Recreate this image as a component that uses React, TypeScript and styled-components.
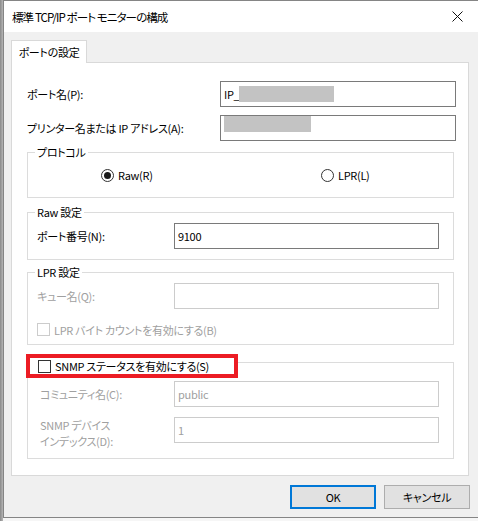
import { FC } from 'react'
import styled, { createGlobalStyle } from 'styled-components'

const font = `"Noto Sans CJK JP", "Noto Sans", "Liberation Sans", sans-serif`

const GlobalStyle = createGlobalStyle`
    html, body {
        margin: 0;
        padding: 0;
        background: #e9e9e9;
    }
    * {
        box-sizing: border-box;
    }
`

// styles
const Desktop = styled.div`
    width: 478px;
    height: 521px;
    overflow: hidden;
    padding-left: 3px;
    background: linear-gradient(to right, #8a8a8a 0, #b5b5b5 3px, transparent 3px), #f6f6f6;
    font-family: ${font};
    font-size: 11px;
    letter-spacing: -0.3px;
    font-feature-settings: 'palt' 1;
`

const Window = styled.div`
    width: 480px;
    height: 518px;
    border: 1px solid #858585;
    border-right: none;
    background: #f0f0f0;
    display: flex;
    flex-direction: column;
`

const TitleBar = styled.div`
    height: 31px;
    flex: none;
    background: #ffffff;
    display: flex;
    align-items: center;
    justify-content: space-between;
    padding: 0 0 0 8px;
    font-size: 11.5px;
    letter-spacing: -0.9px;
    color: #000;
`

const CloseButton = styled.div`
    width: 46px;
    height: 31px;
    margin-right: 14px;
    display: flex;
    align-items: center;
    justify-content: flex-end;
    padding-right: 6px;
`

const Body = styled.div`
    flex: 1;
    padding: 8px 0 0 7px;
    display: flex;
    flex-direction: column;
`

const TabStrip = styled.div`
    display: flex;
    height: 22px;
    flex: none;
`

const Tab = styled.div`
    width: 76px;
    height: 23px;
    background: #ffffff;
    border: 1px solid #d9d9d9;
    border-bottom: none;
    display: flex;
    align-items: center;
    justify-content: center;
    position: relative;
    z-index: 1;
`

const Panel = styled.div`
    width: 458px;
    flex: none;
    background: #ffffff;
    border: 1px solid #d9d9d9;
    padding: 18px 14px 16px 15px;
    display: flex;
    flex-direction: column;
`

const FieldRow = styled.div<{ $label: number; $input: number }>`
    display: grid;
    grid-template-columns: ${({ $label }) => $label}px ${({ $input }) => $input}px;
    grid-template-rows: 26px;
    align-items: center;
    height: 26px;
`

const Label = styled.div<{ $disabled?: boolean; $shift?: number }>`
    color: ${({ $disabled }) => ($disabled ? '#a0a0a0' : '#000')};
    line-height: 16px;
    white-space: nowrap;
    margin-top: ${({ $shift }) => $shift ?? 0}px;
`

const Input = styled.div<{ $disabled?: boolean }>`
    height: 26px;
    border: 1px solid ${({ $disabled }) => ($disabled ? '#cccccc' : '#7a7a7a')};
    display: flex;
    align-items: center;
    padding-left: 3px;
    color: ${({ $disabled }) => ($disabled ? '#a0a0a0' : '#000')};
    background: #fff;
`

const Redacted = styled.span<{ $w: number; $lift?: number }>`
    display: inline-block;
    width: ${({ $w }) => $w}px;
    height: 16px;
    margin-top: ${({ $lift }) => -($lift ?? 0)}px;
    background: #c3c3c3;
`

const Group = styled.div<{ $top: number; $pad: string }>`
    position: relative;
    width: 427px;
    margin-top: ${({ $top }) => $top}px;
    border: 1px solid #dcdcdc;
    padding: ${({ $pad }) => $pad};
    display: flex;
    flex-direction: column;
`

const Legend = styled.div`
    position: absolute;
    top: -9px;
    left: 7px;
    padding: 0 2px;
    background: #fff;
    line-height: 16px;
    color: #000;
`

const Highlight = styled.div`
    position: absolute;
    top: -9px;
    left: -2px;
    width: 212px;
    height: 24px;
    border: 4px solid #ec1c24;
    background: #fff;
    display: flex;
    align-items: center;
    padding-left: 8px;
    gap: 4px;
`

const RadioRow = styled.div`
    display: grid;
    grid-template-columns: 220px auto;
    padding-left: 73px;
    height: 44px;
    align-items: center;
`

const Option = styled.label<{ $disabled?: boolean }>`
    display: flex;
    align-items: center;
    gap: 4px;
    color: ${({ $disabled }) => ($disabled ? '#a0a0a0' : '#000')};
    line-height: 16px;
    white-space: nowrap;
`

const Radio = styled.span<{ $checked?: boolean }>`
    width: 13px;
    height: 13px;
    border-radius: 50%;
    border: 1px solid #333;
    display: flex;
    align-items: center;
    justify-content: center;

    &::after {
        content: '';
        width: 7px;
        height: 7px;
        border-radius: 50%;
        background: ${({ $checked }) => ($checked ? '#1a1a1a' : 'transparent')};
    }
`

const Checkbox = styled.span<{ $disabled?: boolean }>`
    width: 13px;
    height: 13px;
    border: 1px solid ${({ $disabled }) => ($disabled ? '#cccccc' : '#333')};
    background: #fff;
    flex: none;
`

const Footer = styled.div`
    display: flex;
    justify-content: flex-end;
    gap: 8px;
    padding: 9px 9px 0 0;
    width: 468px;
`

const Button = styled.div<{ $default?: boolean }>`
    width: 86px;
    height: 24px;
    background: #e1e1e1;
    border: ${({ $default }) => ($default ? '2px solid #0078d7' : '1px solid #adadad')};
    display: flex;
    align-items: center;
    justify-content: center;
    color: #000;
`

// component current
const App: FC = () => {
    return (
        <Desktop>
            <GlobalStyle />
            <Window>
                <TitleBar>
                    <span>標準 TCP/IP ポート モニターの構成</span>
                    <CloseButton>
                        <svg width="11" height="11" viewBox="0 0 11 11">
                            <path d="M0.5 0.5 L10.5 10.5 M10.5 0.5 L0.5 10.5" stroke="#111" strokeWidth="1" fill="none" />
                        </svg>
                    </CloseButton>
                </TitleBar>

                <Body>
                    <TabStrip>
                        <Tab>ポートの設定</Tab>
                    </TabStrip>

                    <Panel>
                        <FieldRow $label={193} $input={236}>
                            <Label>ポート名(P):</Label>
                            <Input>
                                IP_<Redacted $w={95} />
                            </Input>
                        </FieldRow>

                        <FieldRow $label={193} $input={236} style={{ marginTop: 8 }}>
                            <Label>プリンター名または IP アドレス(A):</Label>
                            <Input>
                                <Redacted $w={87} $lift={8} />
                            </Input>
                        </FieldRow>

                        <Group $top={11} $pad="0">
                            <Legend>プロトコル</Legend>
                            <RadioRow>
                                <Option>
                                    <Radio $checked />
                                    Raw(R)
                                </Option>
                                <Option>
                                    <Radio />
                                    LPR(L)
                                </Option>
                            </RadioRow>
                        </Group>

                        <Group $top={14} $pad="10px 0 10px 9px">
                            <Legend>Raw 設定</Legend>
                            <FieldRow $label={137} $input={265}>
                                <Label>ポート番号(N):</Label>
                                <Input>9100</Input>
                            </FieldRow>
                        </Group>

                        <Group $top={12} $pad="10px 0 8px 9px">
                            <Legend>LPR 設定</Legend>
                            <FieldRow $label={137} $input={265}>
                                <Label $disabled>キュー名(Q):</Label>
                                <Input $disabled />
                            </FieldRow>
                            <Option $disabled style={{ marginTop: 14, height: 13 }}>
                                <Checkbox $disabled />
                                LPR バイト カウントを有効にする(B)
                            </Option>
                        </Group>

                        <Group $top={17} $pad="18px 0 15px 12px">
                            <Highlight>
                                <Checkbox />
                                <Option>SNMP ステータスを有効にする(S)</Option>
                            </Highlight>
                            <FieldRow $label={134} $input={265}>
                                <Label $disabled>コミュニティ名(C):</Label>
                                <Input $disabled>public</Input>
                            </FieldRow>
                            <FieldRow $label={134} $input={265} style={{ marginTop: 10 }}>
                                <Label $disabled $shift={6}>
                                    SNMP デバイス
                                    <br />
                                    インデックス(D):
                                </Label>
                                <Input $disabled>1</Input>
                            </FieldRow>
                        </Group>
                    </Panel>

                    <Footer>
                        <Button $default>OK</Button>
                        <Button>キャンセル</Button>
                    </Footer>
                </Body>
            </Window>
        </Desktop>
    )
}

export default App
